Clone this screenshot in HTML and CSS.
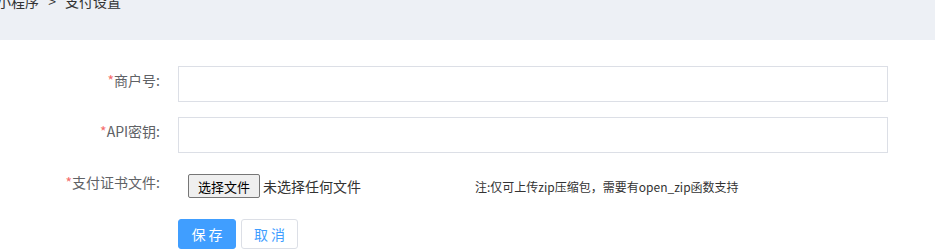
FILE: index.html
```html
<!DOCTYPE html>
<html lang="zh-CN">
<head>
  <meta charset="UTF-8">
  <title>支付设置</title>
  <link rel="stylesheet" href="styles.css">
</head>
<body>
  <div class="crumb-bar">
    <div class="crumb">小程序 <span class="sep">&gt;</span> 支付设置</div>
  </div>
  <form class="pay-form">
    <div class="form-item">
      <label class="form-label"><i>*</i>商户号:</label>
      <div class="form-content"><input class="form-input" type="text"></div>
    </div>
    <div class="form-item">
      <label class="form-label"><i>*</i>API密钥:</label>
      <div class="form-content"><input class="form-input" type="text"></div>
    </div>
    <div class="form-item">
      <label class="form-label"><i>*</i>支付证书文件:</label>
      <div class="form-content file-row">
        <button type="button" class="file-btn">选择文件</button>
        <span class="file-name">未选择任何文件</span>
        <span class="file-tip">注:仅可上传zip压缩包，需要有open_zip函数支持</span>
      </div>
    </div>
    <div class="form-item actions">
      <button type="button" class="btn btn-primary">保 存</button>
      <button type="button" class="btn btn-plain">取 消</button>
    </div>
  </form>
</body>
</html>
```

FILE: styles.css
```css
html, body {
  margin: 0;
  padding: 0;
  background: #fff;
}
body {
  font-family: "Noto Sans CJK SC", "Microsoft YaHei", sans-serif;
  font-size: 14px;
  color: #606266;
}
.crumb-bar {
  height: 40px;
  background: #edf0f5;
  overflow: hidden;
}
.crumb {
  margin-top: -9px;
  margin-left: -3px;
  line-height: 20px;
  color: #333;
}
.crumb .sep {
  margin: 0 6px;
}
.pay-form {
  padding-top: 26px;
}
.form-item {
  display: flex;
  margin-bottom: 15px;
}
.form-label {
  width: 178px;
  box-sizing: border-box;
  padding-right: 18px;
  text-align: right;
  line-height: 28px;
  color: #606266;
}
.form-label i {
  font-style: normal;
  color: #f56c6c;
}
.form-content {
  width: 710px;
  height: 36px;
}
.form-input {
  display: block;
  width: 100%;
  height: 36px;
  box-sizing: border-box;
  border: 1px solid #dcdfe6;
  border-radius: 0;
  outline: none;
  padding: 0 10px;
  font-size: 14px;
}
.file-row {
  display: flex;
  align-items: center;
  padding-left: 10px;
  box-sizing: border-box;
}
.file-btn {
  height: 24px;
  width: 72px;
  padding: 0;
  font-family: inherit;
  font-size: 13px;
  color: #000;
  background: #efefef;
  border: 1px solid #767676;
  border-radius: 2px;
}
.file-name {
  margin-left: 3px;
  color: #333;
}
.file-tip {
  margin-left: 114px;
  font-size: 12px;
  color: #333;
}
.actions {
  padding-left: 178px;
  gap: 5px;
}
.btn {
  height: 30px;
  box-sizing: border-box;
  font-family: inherit;
  font-size: 14px;
  border-radius: 3px;
  padding: 0;
  cursor: pointer;
}
.btn-primary {
  width: 58px;
  background: #409eff;
  border: 1px solid #409eff;
  color: #fff;
}
.btn-plain {
  width: 57px;
  background: #fff;
  border: 1px solid #dcdfe6;
  color: #409eff;
}
```
